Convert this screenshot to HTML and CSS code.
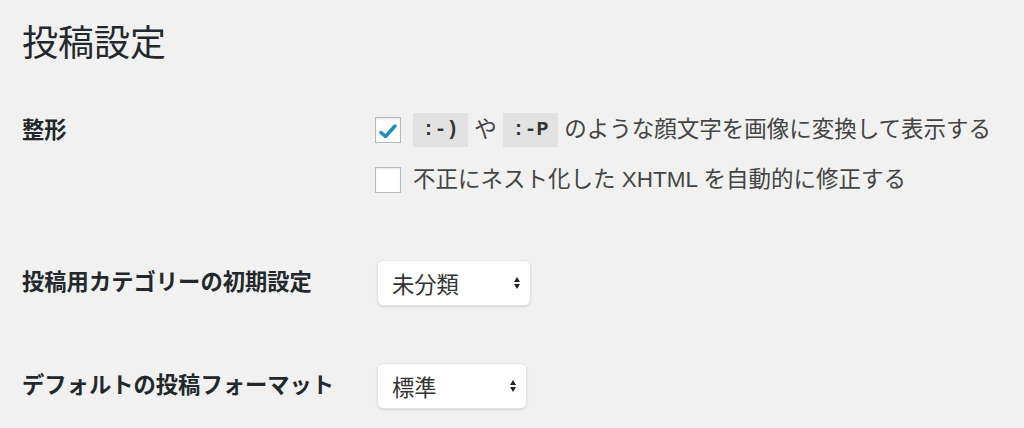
FILE: index.html
```html
<!DOCTYPE html>
<html lang="ja">
<head>
<meta charset="utf-8">
<title>投稿設定</title>
<link rel="stylesheet" href="styles.css">
</head>
<body>
<div class="wrap">
  <h1 class="title">投稿設定</h1>
  <div class="form">
    <div class="row row-format">
      <div class="label">整形</div>
      <div class="field">
        <div class="option">
          <span class="checkbox checked">
            <svg viewBox="0 0 18 15" width="18" height="15"><path d="M2 8.5 L6.5 12.5 L16 2" fill="none" stroke="#1e8cbe" stroke-width="3.4" stroke-linejoin="round" stroke-linecap="round"/></svg>
          </span>
          <span class="text"><code class="code">:-)</code> や <code class="code">:-P</code> のような顔文字を画像に変換して表示する</span>
        </div>
        <div class="option">
          <span class="checkbox"></span>
          <span class="text">不正にネスト化した XHTML を自動的に修正する</span>
        </div>
      </div>
    </div>
    <div class="row row-category">
      <div class="label">投稿用カテゴリーの初期設定</div>
      <div class="field">
        <div class="select select-wide"><span>未分類</span><span class="arrows"><i class="up"></i><i class="down"></i></span></div>
      </div>
    </div>
    <div class="row row-post">
      <div class="label">デフォルトの投稿フォーマット</div>
      <div class="field">
        <div class="select"><span>標準</span><span class="arrows"><i class="up"></i><i class="down"></i></span></div>
      </div>
    </div>
  </div>
</div>
</body>
</html>
```
FILE: styles.css
```css
html, body {
  margin: 0;
  padding: 0;
  background: #f1f1f1;
}
body {
  font-family: "Liberation Sans", "Noto Sans CJK JP", sans-serif;
  color: #444;
  width: 1024px;
  height: 428px;
  overflow: hidden;
}
.wrap {
  padding: 22px 0 0 22px;
}
.title {
  margin: 0;
  font-size: 36px;
  line-height: 44px;
  font-weight: 400;
  color: #23282d;
}
.form {
  display: flex;
  flex-direction: column;
}
.row {
  display: grid;
  grid-template-columns: 353px 1fr;
  align-items: start;
}
.row-format {
  margin-top: 48px;
}
.row-category {
  margin-top: 63px;
  align-items: center;
}
.row-post {
  margin-top: 57px;
  align-items: center;
}
.label {
  font-size: 22.3px;
  font-weight: 700;
  color: #23282d;
  line-height: 34px;
}
.field {
  display: flex;
  flex-direction: column;
  gap: 15px;
}
.option {
  display: flex;
  align-items: center;
  height: 34px;
  gap: 12px;
}
.option:first-child .checkbox {
  margin-top: -2px;
}
.text {
  font-size: 22.5px;
  line-height: 34px;
  color: #444;
  white-space: nowrap;
}
.checkbox {
  box-sizing: border-box;
  width: 26px;
  height: 26px;
  border: 1.5px solid #b4b9be;
  background: #fff;
  box-shadow: inset 0 1px 2px rgba(0,0,0,0.1);
  display: flex;
  align-items: center;
  justify-content: center;
}
.checkbox svg {
  display: block;
  margin-top: 2px;
}
.code {
  font-family: "Liberation Mono", monospace;
  font-size: 20px;
  font-weight: 700;
  background: #e2e2e2;
  padding: 6px 8px 6px 8px;
  color: #333;
  line-height: 22px;
  display: inline-block;
  width: 39px;
  text-align: center;
  vertical-align: middle;
  position: relative;
  top: -2px;
}
.select {
  box-sizing: border-box;
  width: 150px;
  height: 46px;
  margin-left: 2px;
  background: #fff;
  border-radius: 6px;
  border: 1px solid #e4e4e4;
  box-shadow: 0 1px 2px rgba(0,0,0,0.12);
  display: flex;
  align-items: center;
  justify-content: space-between;
  padding: 0 10px 0 14px;
  font-size: 22.3px;
  color: #333;
}
.select-wide {
  width: 154px;
}
.arrows {
  display: flex;
  flex-direction: column;
  align-items: center;
  gap: 2px;
}
.arrows i {
  display: block;
  width: 0;
  height: 0;
  border-left: 3.5px solid transparent;
  border-right: 3.5px solid transparent;
}
.arrows .up {
  border-bottom: 5px solid #222;
}
.arrows .down {
  border-top: 5px solid #222;
}
```
